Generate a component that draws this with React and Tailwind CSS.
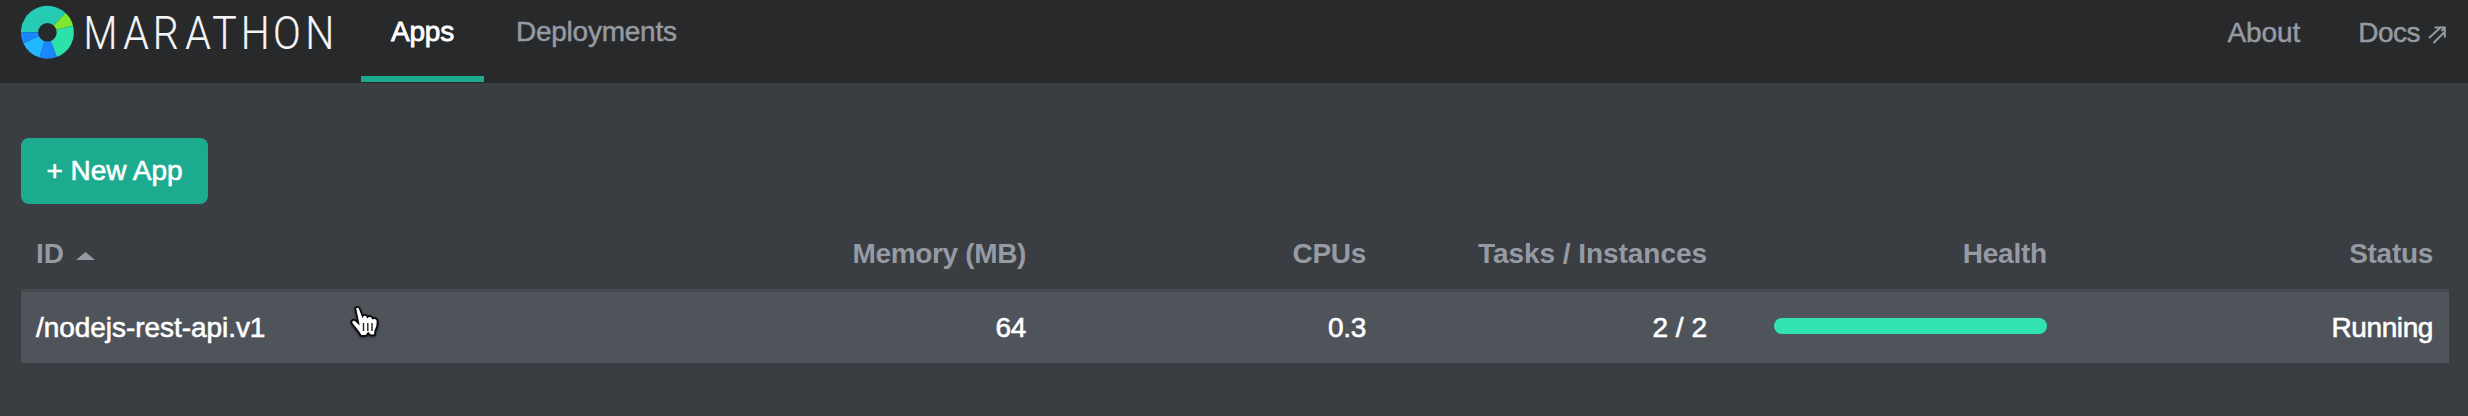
import React from "react";

function Logo() {
  return (
    <svg className="block shrink-0" width="316" height="64" viewBox="0 0 316 64" role="img" aria-label="Marathon">
      <g transform="translate(26.4 32.3)">
        <path d="M0 0 L-26.5 0 A26.5 26.5 0 0 1 18.2 -19.2 Z" fill="#25ccb3" />
        <path d="M0 0 L18.2 -19.2 A26.5 26.5 0 0 1 25.6 -6.9 Z" fill="#7fe82e" />
        <path d="M0 0 L25.6 -6.9 A26.5 26.5 0 0 1 9.4 24.8 Z" fill="#2be2ab" />
        <path d="M0 0 L9.4 24.8 A26.5 26.5 0 0 1 -8 25.3 Z" fill="#1a86ff" />
        <path d="M0 0 L-8 25.3 A26.5 26.5 0 0 1 -24.1 11 Z" fill="#22b8ff" />
        <path d="M0 0 L-24.1 11 A26.5 26.5 0 0 1 -26.5 0 Z" fill="#1a86ff" />
        <circle r="9.3" fill="#27292b" />
      </g>
      <g fontSize="46" strokeWidth="0.2" className="fill-[#f4f5f7] stroke-[#f4f5f7] font-['Roboto',sans-serif] font-light">
        <text transform="translate(62.5 49) scale(0.85 1)">M</text>
        <text
          transform="translate(0 49) scale(0.89 1)"
          x="114.8 147.9 184.5 214.8 247 283.3 319.5"
          y="0"
        >
          ARATHON
        </text>
      </g>
    </svg>
  );
}

function Nav() {
  return (
    <header className="flex h-[83px] bg-[#27292b] pl-[21px] pr-[22px]">
      <Logo />
      <nav className="ml-6 flex h-[82px] leading-8">
        <a className="w-[123px] border-b-[6px] border-[#1dab90] pt-4 text-center tracking-[-0.2px] text-white [-webkit-text-stroke:0.8px]">Apps</a>
        <a className="ml-8 pt-4 tracking-[-0.25px] text-[#969aa3] [-webkit-text-stroke:0.5px]">Deployments</a>
      </nav>
      <nav className="ml-auto flex pt-[17px] leading-8 text-[#969aa3] [-webkit-text-stroke:0.5px]">
        <a className="mr-[58px] tracking-[-0.1px]">About</a>
        <a className="flex tracking-[-0.5px]">
          Docs
          <svg className="ml-2 mt-[9px]" width="18" height="18" viewBox="0 0 18 18" fill="none" stroke="#969aa3" strokeWidth="2">
            <path d="M1 12 L12 2 M5.5 17 L16 6.5 M6.5 1.6 H16.8 V11.5 M16.8 1.6 L13.5 5" />
          </svg>
        </a>
      </nav>
    </header>
  );
}

function Pointer() {
  return (
    <svg className="absolute left-[349px] top-[304px]" width="34" height="38" viewBox="0 0 34 38">
      <path
        d="M6.3 4.5 C7 2.4 10 2.4 10.8 4.8 L13.6 12 C14.5 10.3 18 10.5 18.5 12.8 C20 11.4 23.3 12 23.7 14.3 C26 13.4 28.6 14.8 28.6 17.5 C28.8 21 28.2 24 26.4 26.8 L25.7 31.4 H21.2 L19.2 29.2 L17.3 31.8 H11.8 C10 28 6.5 24.3 3.3 20.4 C1 17.4 3.6 14.6 6.4 16.3 L9.3 18.9 Z"
        fill="white"
        stroke="#090909"
        strokeWidth="1.8"
        className="drop-shadow-[0_1px_1px_rgba(0,0,0,0.5)]"
      />
      <path d="M14.5 19 V27 M18.8 19 V27 M23 19 V27" stroke="#222" strokeWidth="1.4" />
    </svg>
  );
}

const columns = "grid grid-cols-[681px_340px_340px_341px_340px_386px]";

export default function App() {
  return (
    <div className="relative h-[416px] w-[2468px] overflow-hidden bg-[#3a3d41] font-['Liberation_Sans',Arial,sans-serif] text-[28px]">
      <Nav />
      <main className="pl-[21px] pr-[19px] pt-[55px]">
        <button className="block h-[66px] w-[187px] rounded-lg bg-[#1dab90] pb-px text-center text-white [-webkit-text-stroke:0.6px]">
          + New App
        </button>
        <div className={`${columns} mt-[34px] h-[51px] text-right font-bold leading-8 text-[#969aa3]`}>
          <div className="flex pl-[15px]">
            ID
            <svg className="ml-3 mt-[14px]" width="19" height="8" viewBox="0 0 19 8">
              <path d="M0 8 L9.5 0 L19 8 Z" fill="#969aa3" />
            </svg>
          </div>
          <div className="px-4 tracking-[-0.35px]">Memory (MB)</div>
          <div className="px-4 tracking-[-0.3px]">CPUs</div>
          <div className="px-4 tracking-[-0.05px]">Tasks / Instances</div>
          <div className="px-4 tracking-[-0.2px]">Health</div>
          <div className="px-4 tracking-[-0.3px]">Status</div>
        </div>
        <div className={`${columns} h-[74px] border-t-[3px] border-[#474b50] bg-[#4f535a] pt-5 text-right leading-8 text-white [-webkit-text-stroke:0.6px]`}>
          <div className="pl-[15px] text-left tracking-[-0.05px]">/nodejs-rest-api.v1</div>
          <div className="px-4 tracking-[-0.3px]">64</div>
          <div className="px-4 tracking-[-0.3px]">0.3</div>
          <div className="px-4">2 / 2</div>
          <div className="pl-[51px] pr-4 pt-1.5">
            <div className="h-4 rounded-full bg-[#31e3b0]" />
          </div>
          <div className="px-4 tracking-[-0.4px]">Running</div>
        </div>
      </main>
      <Pointer />
    </div>
  );
}
